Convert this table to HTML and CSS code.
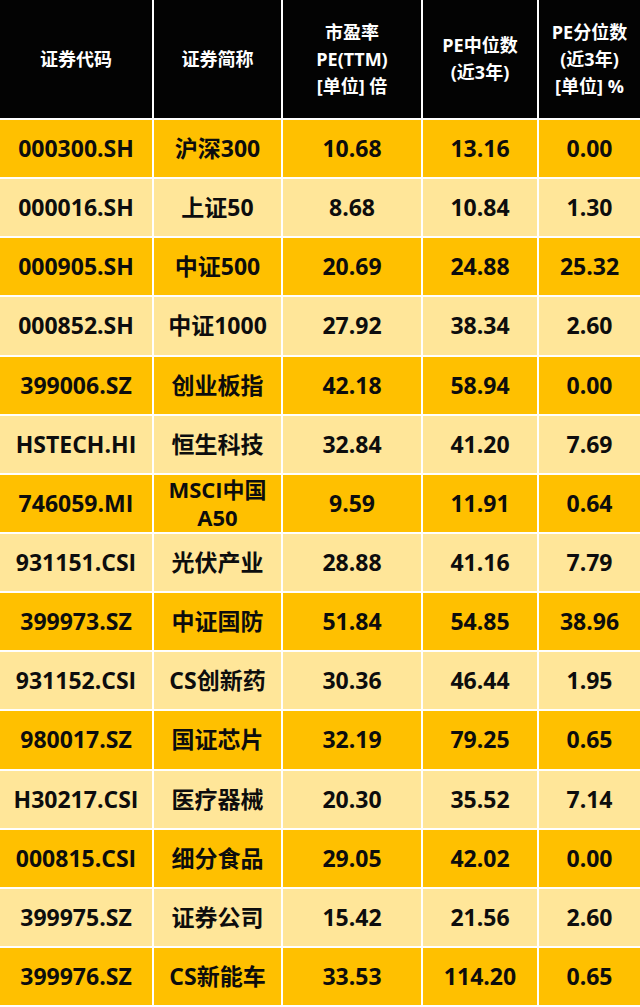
FILE: index.html
```html
<!DOCTYPE html>
<html lang="zh">
<head>
<meta charset="utf-8">
<title>指数估值</title>
<link rel="stylesheet" href="styles.css">
</head>
<body>
<div class="table">
  <div class="th">证券代码</div>
  <div class="th">证券简称</div>
  <div class="th">市盈率<br>PE(TTM)<br>[单位] 倍</div>
  <div class="th">PE中位数<br>(近3年)</div>
  <div class="th">PE分位数<br>(近3年)<br>[单位] %</div>

  <div class="td d">000300.SH</div><div class="td d">沪深300</div><div class="td d">10.68</div><div class="td d">13.16</div><div class="td d">0.00</div>
  <div class="td l">000016.SH</div><div class="td l">上证50</div><div class="td l">8.68</div><div class="td l">10.84</div><div class="td l">1.30</div>
  <div class="td d">000905.SH</div><div class="td d">中证500</div><div class="td d">20.69</div><div class="td d">24.88</div><div class="td d">25.32</div>
  <div class="td l">000852.SH</div><div class="td l">中证1000</div><div class="td l">27.92</div><div class="td l">38.34</div><div class="td l">2.60</div>
  <div class="td d">399006.SZ</div><div class="td d">创业板指</div><div class="td d">42.18</div><div class="td d">58.94</div><div class="td d">0.00</div>
  <div class="td l">HSTECH.HI</div><div class="td l">恒生科技</div><div class="td l">32.84</div><div class="td l">41.20</div><div class="td l">7.69</div>
  <div class="td d">746059.MI</div><div class="td d two"><span>MSCI中国</span><span>A50</span></div><div class="td d">9.59</div><div class="td d">11.91</div><div class="td d">0.64</div>
  <div class="td l">931151.CSI</div><div class="td l">光伏产业</div><div class="td l">28.88</div><div class="td l">41.16</div><div class="td l">7.79</div>
  <div class="td d">399973.SZ</div><div class="td d">中证国防</div><div class="td d">51.84</div><div class="td d">54.85</div><div class="td d">38.96</div>
  <div class="td l">931152.CSI</div><div class="td l">CS创新药</div><div class="td l">30.36</div><div class="td l">46.44</div><div class="td l">1.95</div>
  <div class="td d">980017.SZ</div><div class="td d">国证芯片</div><div class="td d">32.19</div><div class="td d">79.25</div><div class="td d">0.65</div>
  <div class="td l">H30217.CSI</div><div class="td l">医疗器械</div><div class="td l">20.30</div><div class="td l">35.52</div><div class="td l">7.14</div>
  <div class="td d">000815.CSI</div><div class="td d">细分食品</div><div class="td d">29.05</div><div class="td d">42.02</div><div class="td d">0.00</div>
  <div class="td l">399975.SZ</div><div class="td l">证券公司</div><div class="td l">15.42</div><div class="td l">21.56</div><div class="td l">2.60</div>
  <div class="td d">399976.SZ</div><div class="td d">CS新能车</div><div class="td d">33.53</div><div class="td d">114.20</div><div class="td d">0.65</div>
</div>
</body>
</html>
```

FILE: styles.css
```css
html, body {
  margin: 0;
  padding: 0;
  background: #ffffff;
}

.table {
  display: grid;
  grid-template-columns: 152px 127px 138px 114px 1fr;
  grid-template-rows: 118px;
  grid-auto-rows: 57.15px;
  gap: 2px;
  background: #ffffff;
  font-family: "Open Sans", "Noto Sans CJK SC", sans-serif;
  font-weight: 700;
}

.th, .td {
  display: flex;
  align-items: center;
  justify-content: center;
  text-align: center;
}

.th {
  background: #030303;
  color: #ffffff;
  font-size: 18px;
  line-height: 27px;
}

.td {
  color: #0d0d0d;
  font-size: 23px;
  line-height: 27px;
}

.td.two {
  flex-direction: column;
  font-size: 22px;
  line-height: 28px;
}

.td.d {
  background: #ffc000;
}

.td.l {
  background: #ffe699;
}
```
